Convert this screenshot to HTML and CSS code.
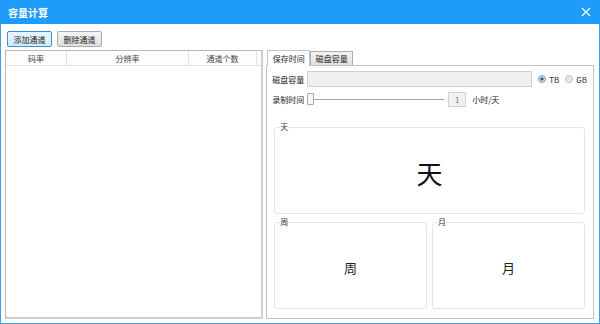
FILE: index.html
```html
<!DOCTYPE html>
<html lang="zh-CN">
<head>
<meta charset="UTF-8">
<meta name="viewport" content="width=device-width, initial-scale=1.0">
<title>容量计算</title>
<link rel="stylesheet" href="styles.css">
</head>
<body>

<div class="window">
<!-- Title bar -->
<div class="titlebar">
<span class="title">容量计算</span>
<svg class="close" width="10" height="10" viewBox="0 0 10 10">
<path d="M1 1 L9 9 M9 1 L1 9" stroke="#fff" stroke-width="1.2" fill="none"/>
</svg>
</div>

<div class="content">
<!-- Toolbar -->
<div class="toolbar">
<button type="button" class="btn btn-focus">添加通道</button>
<button type="button" class="btn">删除通道</button>
</div>

<div class="main">
<!-- Channel table -->
<div class="table-panel">
<div class="table-head">
<div class="col col-rate">码率</div>
<div class="col col-res">分辨率</div>
<div class="col col-count">通道个数</div>
<div class="col col-rest"></div>
</div>
</div>

<!-- Tabs -->
<div class="tabs">
<div class="tab-bar">
<div class="tab active">保存时间</div>
<div class="tab">磁盘容量</div>
</div>
<div class="tab-pane">
<div class="row">
<span class="label">磁盘容量</span>
<div class="input"></div>
<span class="radio checked"></span><span class="radio-label">TB</span>
<span class="radio"></span><span class="radio-label">GB</span>
</div>
<div class="row">
<span class="label">录制时间</span>
<div class="slider">
<span class="handle"></span>
<span class="track"></span>
</div>
<div class="spin">1</div>
<span class="unit">小时/天</span>
</div>

<fieldset class="group group-day">
<legend>天</legend>
<div class="value big">天</div>
</fieldset>

<div class="group-row">
<fieldset class="group">
<legend>周</legend>
<div class="value">周</div>
</fieldset>
<fieldset class="group">
<legend>月</legend>
<div class="value">月</div>
</fieldset>
</div>
</div>
</div>
</div>
</div>
</div>

</body>
</html>
```

FILE: styles.css
```css
/* General styling */
* {
    box-sizing: border-box;
}

body {
    margin: 0;
    font-family: "Noto Sans CJK SC", "Noto Sans", sans-serif;
    font-size: 8px;
    color: #333;
    background: #fff;
    white-space: nowrap;
}

.window {
    width: 600px;
    height: 324px;
    display: flex;
    flex-direction: column;
    border: 1px solid #3c9fe6;
    border-top: none;
}

/* Title bar */
.titlebar {
    height: 24px;
    flex-shrink: 0;
    margin: 0 -1px;
    background: #1e9bfb;
    display: flex;
    align-items: center;
    justify-content: space-between;
    padding: 0 9px 0 8px;
}

.title {
    color: #fff;
    font-size: 10px;
    font-weight: bold;
}

.content {
    flex: 1;
    min-height: 0;
    display: flex;
    flex-direction: column;
    padding: 7px 5px 4px 4px;
}

/* Buttons */
.toolbar {
    display: flex;
    gap: 5px;
    padding-left: 2px;
}

.btn {
    width: 45px;
    height: 16px;
    padding: 0;
    font-family: inherit;
    font-size: 8px;
    color: #222;
    border: 1px solid #acacac;
    border-radius: 2px;
    background: linear-gradient(#f4f4f4, #dedede);
}

.btn-focus {
    border-color: #3c8fd0;
    background: linear-gradient(#eaf5fc, #d3eaf8);
}

.main {
    flex: 1;
    min-height: 0;
    display: flex;
    gap: 3px;
    margin-top: 2px;
}

/* Table */
.table-panel {
    width: 259px;
    margin-top: 1px;
    border: 1px solid #b9b9b9;
    border-right-width: 2px;
    border-bottom-width: 2px;
    border-bottom-color: #cfcfcf;
    border-right-color: #cfcfcf;
}

.table-head {
    display: flex;
    height: 15px;
    border-bottom: 1px solid #e2e2e2;
    background: #fdfdfd;
}

.col {
    display: flex;
    align-items: center;
    justify-content: center;
    border-right: 1px solid #e4e4e4;
    color: #444;
}

.col-rate {
    width: 61px;
}

.col-res {
    width: 122px;
}

.col-count {
    width: 68px;
}

.col-rest {
    flex: 1;
    border-right: none;
}

/* Tabs */
.tabs {
    flex: 1;
    display: flex;
    flex-direction: column;
}

.tab-bar {
    display: flex;
    align-items: flex-end;
    height: 16px;
    flex-shrink: 0;
    padding-left: 1px;
}

.tab {
    width: 43px;
    height: 14px;
    display: flex;
    align-items: center;
    justify-content: center;
    border: 1px solid #adadad;
    border-bottom: none;
    background: linear-gradient(#f2f2f2, #e2e2e2);
    color: #222;
}

.tab.active {
    height: 16px;
    margin-bottom: -1px;
    background: #fff;
    border-color: #c4c4c4;
    position: relative;
}

.tab-pane {
    flex: 1;
    border: 1px solid #c4c4c4;
    padding: 5px 6px 0 5px;
    display: flex;
    flex-direction: column;
}

.row {
    display: flex;
    align-items: center;
    height: 16px;
    flex-shrink: 0;
}

.row + .row {
    margin-top: 4px;
}

.label {
    width: 35px;
    flex-shrink: 0;
    color: #222;
}

.input {
    width: 225px;
    height: 16px;
    flex-shrink: 0;
    border: 1px solid #cfcfcf;
    background: #f0f0f0;
}

.radio {
    width: 8px;
    height: 8px;
    flex-shrink: 0;
    margin-left: 6px;
    border-radius: 50%;
    border: 1px solid #c0c0c0;
    background: #e8e8e8;
}

.radio.checked {
    border-color: #6e9ec0;
    background: radial-gradient(circle, #3b5f80 35%, #cfe3f2 40%);
}

.radio-label {
    margin-left: 3px;
    color: #333;
}

.slider {
    width: 137px;
    flex-shrink: 0;
    display: flex;
    align-items: center;
}

.handle {
    width: 7px;
    height: 12px;
    border: 1px solid #a8a8a8;
    border-radius: 1px;
    background: #f6f6f6;
}

.track {
    flex: 1;
    height: 1px;
    background: #a5a5a5;
}

.spin {
    width: 18px;
    height: 15px;
    flex-shrink: 0;
    margin-left: 4px;
    border: 1px solid #d2d2d2;
    background: #f2f2f2;
    display: flex;
    align-items: center;
    justify-content: center;
    color: #777;
}

.unit {
    margin-left: 6px;
    color: #222;
}

/* Result groups */
.group {
    margin: 0;
    padding: 0;
    border: 1px solid #e6e6e6;
    border-radius: 3px;
    display: block;
    min-width: 0;
    flex-shrink: 0;
}

.group legend {
    padding: 0;
    margin-left: 5px;
    font-size: 8px;
    line-height: 10px;
    color: #333;
}

.group-day {
    margin: 15px 2px 0 2px;
}

.group-day .value {
    height: 81px;
}

.group-row {
    display: flex;
    gap: 5px;
    margin: 3px 2px 0 2px;
}

.group-row .group {
    flex: 1;
}

.value {
    height: 81px;
    display: flex;
    align-items: center;
    justify-content: center;
    font-size: 13px;
    color: #222;
}

.value.big {
    font-size: 26px;
    color: #111;
}
```
